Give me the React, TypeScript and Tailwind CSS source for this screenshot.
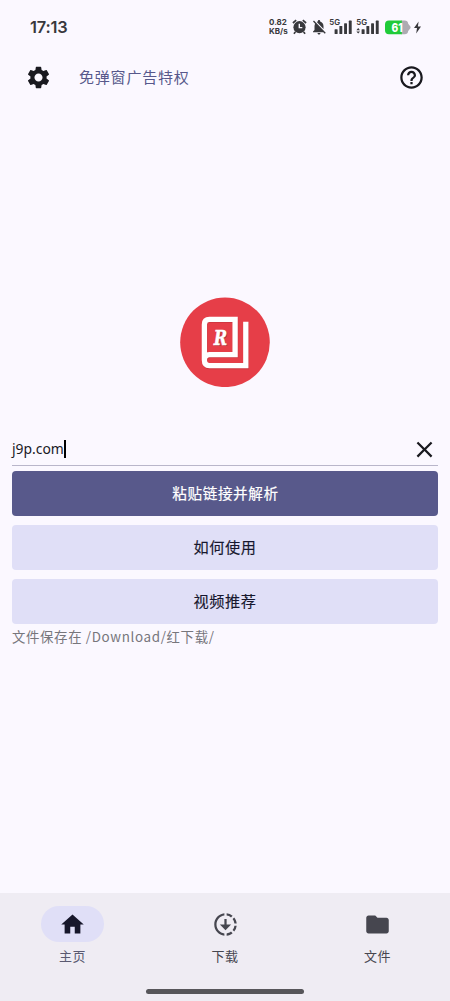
import type { ReactNode } from "react";
import {
  MdClose,
  MdDownloading,
  MdFolder,
  MdHelpOutline,
  MdHome,
  MdNotificationsOff,
  MdSettings,
} from "react-icons/md";

function AlarmIcon() {
  return (
    <svg width="15" height="16" viewBox="0 0 15 16" fill="none">
      <circle cx="7.5" cy="8.2" r="6.1" fill="#38383c" />
      <path d="M0.9 4 4.2 1.2M14.1 4 10.8 1.2M3.4 13l-1.5 1.7M11.6 13l1.5 1.7" stroke="#38383c" strokeWidth="1.7" />
      <path d="M7.3 4.8v3.8h3" stroke="#faf8ff" strokeWidth="1.4" />
    </svg>
  );
}

function Signal({ arrows = false }: { arrows?: boolean }) {
  return (
    <svg width="25" height="20" viewBox="0 0 25 20" fill="#38383c">
      <text x="0.3" y="8.3" fontSize="8" fontWeight="600" fontFamily="Inter, sans-serif" textLength="10.8" lengthAdjust="spacingAndGlyphs">
        5G
      </text>
      {arrows && <path d="M0.4 13.2 2.2 11l1.8 2.2zM0.4 14.4 2.2 16.4 4 14.4z" />}
      <rect x="5.6" y="12.2" width="3" height="4.8" rx="0.6" />
      <rect x="10.4" y="9" width="2.9" height="8" rx="0.6" />
      <rect x="15.1" y="6.3" width="2.9" height="10.7" rx="0.6" />
      <rect x="19.8" y="3.6" width="2.9" height="13.4" rx="0.6" />
    </svg>
  );
}

function Battery() {
  return (
    <svg width="26" height="15" viewBox="0 0 26 15">
      <path d="M16 0.6h3.6a3.6 3.6 0 0 1 3.6 3.2l2 2.4a2 2 0 0 1 0 2.4l-2 2.4a3.6 3.6 0 0 1-3.6 3.2H16z" fill="#adabb2" />
      <path d="M4 0.6h12.8v13.6H4a4 4 0 0 1-4-4V4.6a4 4 0 0 1 4-4z" fill="#20cb39" />
      <text x="6.5" y="11.5" fontSize="11.5" fontWeight="800" fontFamily="Inter, sans-serif" fill="#fff" textLength="11.2" lengthAdjust="spacingAndGlyphs">
        61
      </text>
    </svg>
  );
}

function StatusBar() {
  return (
    <div className="flex h-[54px] items-center justify-between pr-[29px] pl-[30px] text-[#38383c]">
      <span className="font-['Inter',sans-serif] text-[16.4px] font-semibold tracking-[-0.2px]">17:13</span>
      <div className="flex items-center">
        <div className="w-[22px] font-['Inter',sans-serif] text-[8px] leading-[9px] font-bold whitespace-nowrap">
          <div>0.82</div>
          <div>KB/s</div>
        </div>
        <div className="ml-px"><AlarmIcon /></div>
        <MdNotificationsOff size={18} className="ml-[3px]" />
        <div className="ml-px"><Signal /></div>
        <div className="ml-[2px]"><Signal arrows /></div>
        <div className="ml-[4px]"><Battery /></div>
        <svg width="7" height="13" viewBox="0 0 7 13" className="ml-[3px]">
          <path d="M4.6 0.4 0 7h3L2.2 12.6 7 5.6H3.9z" fill="#38383c" />
        </svg>
      </div>
    </div>
  );
}

function BookLogo() {
  return (
    <svg width="90" height="90" viewBox="0 0 90 90">
      <circle cx="45" cy="45.3" r="44.8" fill="#e63e48" />
      <g fill="none" strokeWidth="5.3">
        <path
          d="M24.4 63.2V27.4Q24.4 22.4 29.5 22.4H55.1V57.6H29.5Q24.4 57.6 24.4 63.1T29.5 68.7H65.8V24.7"
          stroke="#b52e39"
          opacity="0.6"
          transform="translate(0.5 0.8)"
        />
        <path d="M24.4 63.2V27.4Q24.4 22.4 29.5 22.4H55.1V57.6H29.5Q24.4 57.6 24.4 63.1T29.5 68.7H65.8V24.7" stroke="#fff" />
      </g>
      <g fontFamily="'DejaVu Serif', serif" fontSize="20" fontWeight="700" fontStyle="italic">
        <text x="34.4" y="49" fill="#a72b36" textLength="13.5" lengthAdjust="spacingAndGlyphs">R</text>
        <text x="33.8" y="48.4" fill="#fff" stroke="#fff" strokeWidth="0.4" textLength="13.5" lengthAdjust="spacingAndGlyphs">R</text>
      </g>
    </svg>
  );
}

function ActionButton({ children, primary = false }: { children: ReactNode; primary?: boolean }) {
  return (
    <button
      className={
        primary
          ? "h-[45px] w-full rounded-[4px] bg-[#58598b] pb-[2px] pl-px text-[14.6px] tracking-[0.6px] text-white [-webkit-text-stroke:0.2px_white]"
          : "h-[45px] w-full rounded-[4px] bg-[#e0dff7] pb-[2px] text-[15.2px] tracking-[0.6px] text-[#17172e] [-webkit-text-stroke:0.15px_#17172e]"
      }
    >
      {children}
    </button>
  );
}

function NavItem({ icon, label, active = false }: { icon: ReactNode; label: string; active?: boolean }) {
  return (
    <div className={active ? "flex w-[63px] flex-col items-center text-[#5a5970]" : "flex w-[63px] flex-col items-center text-[#46464f]"}>
      <div
        className={
          active
            ? "flex h-[36px] w-full items-center justify-center rounded-full bg-[#e0dff7] text-[#17172b]"
            : "flex h-[36px] w-full items-center justify-center"
        }
      >
        {icon}
      </div>
      <span className="mt-[4px] text-[13px] leading-[20px] tracking-[0.6px]">{label}</span>
    </div>
  );
}

export default function App() {
  return (
    <div className="flex h-[1001px] w-[450px] flex-col overflow-hidden bg-[#fbf8ff] font-['Noto_Sans_CJK_SC',sans-serif]">
      <StatusBar />
      <header className="flex h-[47px] items-center pr-[25px] pl-[25px] text-[#19191f]">
        <MdSettings size={27} />
        <span className="ml-[27px] text-[15px] tracking-[0.8px] text-[#57588b]">免弹窗广告特权</span>
        <MdHelpOutline size={27} className="ml-auto" />
      </header>

      <main className="flex flex-1 flex-col px-[12px]">
        <div className="mt-[196px] flex justify-center">
          <BookLogo />
        </div>
        <div className="mt-[46px] flex h-[33px] items-center justify-between border-b border-[#b9b6ca] text-[#19191f]">
          <div className="flex items-center">
            <span className="w-[52px] pt-px font-['Noto_Sans',sans-serif] text-[13.9px] whitespace-nowrap">j9p.com</span>
            <span className="h-[18px] w-[2px] bg-black" />
          </div>
          <MdClose size={27} />
        </div>
        <div className="mt-[4px] flex flex-col gap-[9px] pt-px">
          <ActionButton primary>粘贴链接并解析</ActionButton>
          <ActionButton>如何使用</ActionButton>
          <ActionButton>视频推荐</ActionButton>
        </div>
        <p className="mt-[2px] text-[13.4px] leading-[20px] tracking-[0.65px] text-[#77767c]">
          文件保存在 /Download/红下载/
        </p>
      </main>

      <nav className="flex h-[108px] flex-col items-center bg-[#efecf3]">
        <div className="flex w-full justify-between pt-[13px] pr-[41px] pl-[41px]">
          <NavItem active icon={<MdHome size={27} />} label="主页" />
          <NavItem icon={<MdDownloading size={27} />} label="下载" />
          <NavItem icon={<MdFolder size={27} />} label="文件" />
        </div>
        <div className="mt-auto mb-[7px] h-[5px] w-[158px] rounded-full bg-[#57565a]" />
      </nav>
    </div>
  );
}
